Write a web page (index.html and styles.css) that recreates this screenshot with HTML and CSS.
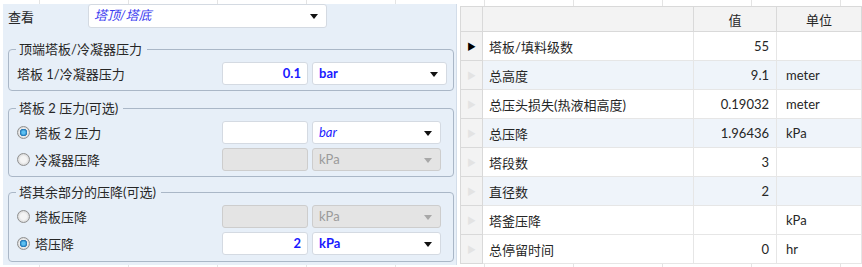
FILE: index.html
```html
<!DOCTYPE html>
<html lang="zh-CN">
<head>
  <meta charset="UTF-8" />
  <meta name="viewport" content="width=device-width, initial-scale=1.0"/>
  <title>塔压力</title>
  <link rel="stylesheet" href="styles.css">
</head>
<body>

  <div class="sheet">

    <div class="panel">
      <div class="view-row">
        <span class="view-label">查看</span>
        <div class="field select view">塔顶/塔底<i class="arrow"></i></div>
      </div>

      <fieldset class="group">
        <legend>顶端塔板/冷凝器压力</legend>
        <div class="row">
          <span class="label">塔板 1/冷凝器压力</span>
          <div class="field value strong">0.1</div>
          <div class="field select unit strong wide">bar<i class="arrow"></i></div>
        </div>
      </fieldset>

      <fieldset class="group">
        <legend>塔板 2 压力(可选)</legend>
        <div class="row">
          <span class="label"><i class="radio on"></i>塔板 2 压力</span>
          <div class="field value"></div>
          <div class="field select unit soft">bar<i class="arrow"></i></div>
        </div>
        <div class="row">
          <span class="label"><i class="radio"></i>冷凝器压降</span>
          <div class="field value off"></div>
          <div class="field select unit off">kPa<i class="arrow"></i></div>
        </div>
      </fieldset>

      <fieldset class="group last">
        <legend>塔其余部分的压降(可选)</legend>
        <div class="row">
          <span class="label"><i class="radio"></i>塔板压降</span>
          <div class="field value off"></div>
          <div class="field select unit off">kPa<i class="arrow"></i></div>
        </div>
        <div class="row">
          <span class="label"><i class="radio on"></i>塔压降</span>
          <div class="field value strong">2</div>
          <div class="field select unit strong">kPa<i class="arrow"></i></div>
        </div>
      </fieldset>
    </div>

    <table class="grid">
      <colgroup>
        <col class="c-head"><col class="c-name"><col class="c-val"><col class="c-unit">
      </colgroup>
      <thead>
        <tr><th></th><th></th><th>值</th><th>单位</th></tr>
      </thead>
      <tbody>
        <tr><td class="rh current">&#9654;</td><td>塔板/填料级数</td><td class="num">55</td><td></td></tr>
        <tr class="alt"><td class="rh">&#9654;</td><td>总高度</td><td class="num">9.1</td><td>meter</td></tr>
        <tr><td class="rh">&#9654;</td><td>总压头损失(热液相高度)</td><td class="num">0.19032</td><td>meter</td></tr>
        <tr class="alt"><td class="rh">&#9654;</td><td>总压降</td><td class="num">1.96436</td><td>kPa</td></tr>
        <tr><td class="rh">&#9654;</td><td>塔段数</td><td class="num">3</td><td></td></tr>
        <tr class="alt"><td class="rh">&#9654;</td><td>直径数</td><td class="num">2</td><td></td></tr>
        <tr><td class="rh">&#9654;</td><td>塔釜压降</td><td class="num"></td><td>kPa</td></tr>
        <tr><td class="rh">&#9654;</td><td>总停留时间</td><td class="num">0</td><td>hr</td></tr>
      </tbody>
    </table>

  </div>

</body>
</html>
```

FILE: styles.css
```css
:root {
  --panel: #e7eff8;
  --group-line: #aab7c7;
  --field-line: #d4dae2;
  --off-bg: #e4e4e4;
  --off-line: #cdcdcd;
  --blue: #1a1aff;
  --text: #262626;
  --grid-line: #d9d9d9;
}

* {
  box-sizing: border-box;
}

body {
  margin: 0;
  width: 862px;
  height: 267px;
  overflow: hidden;
  font-family: Lato, "Noto Sans CJK SC", sans-serif;
  font-size: 13px;
  color: var(--text);
  background-color: #fff;
  background-image: repeating-linear-gradient(90deg, transparent 0 39px, #e4e4e4 39px 40px, transparent 40px 89px);
}

.sheet {
  display: flex;
  align-items: flex-start;
  padding: 4px 0 0 3px;
}

/* left input panel */
.panel {
  width: 454px;
  height: 261px;
  background: var(--panel);
  padding: 0 0 0 5px;
  border-right: 1px solid #d3dde9;
}

.view-row {
  display: flex;
  align-items: center;
  height: 24px;
}

.view-label {
  width: 80px;
}

.field {
  height: 23px;
  line-height: 21px;
  border: 1px solid var(--field-line);
  border-radius: 3px;
  background: #fff;
  padding: 0 6px;
  position: relative;
}

.view {
  width: 239px;
  height: 24px;
  color: #3b3bf0;
  font-style: italic;
  padding-left: 5px;
}

.arrow {
  position: absolute;
  right: 8px;
  top: 9px;
  border-left: 4px solid transparent;
  border-right: 4px solid transparent;
  border-top: 5px solid #111;
}

.group {
  margin: 13px 0 0 0;
  width: 446px;
  border: 1px solid var(--group-line);
  border-radius: 4px;
  padding: 0 0 5px 8px;
}

.group + .group {
  margin-top: 9px;
}

.group.last {
  margin-top: 7px;
  padding-bottom: 6px;
}

.group legend {
  padding: 0 5px 0 3px;
  margin-left: -1px;
  line-height: 16px;
  height: 16px;
}

.row {
  display: flex;
  align-items: center;
  height: 23px;
  margin-top: 4px;
}

.group .row:first-of-type {
  margin-top: 5px;
}

.label {
  width: 205px;
  display: flex;
  align-items: center;
}

.value {
  width: 86px;
  text-align: right;
}

.unit {
  width: 129px;
  margin-left: 4px;
}

.unit.wide {
  width: 135px;
}

.strong {
  color: var(--blue);
  font-weight: bold;
}

.soft {
  color: var(--blue);
  font-style: italic;
}

.off {
  background: var(--off-bg);
  border-color: var(--off-line);
  color: #9a9a9a;
}

.off .arrow {
  border-top-color: #a8a8a8;
}

.radio {
  width: 13px;
  height: 13px;
  border-radius: 50%;
  border: 1px solid #8f8f8f;
  background: radial-gradient(circle, #f4f4f4 0 3px, #d6d6d6 6px);
  margin-right: 5px;
}

.radio.on {
  background: radial-gradient(circle, #5cc0f2 0 1.5px, #1a6fb0 3.5px, #ececec 4px, #d2d2d2 6px);
}

/* right result grid */
.grid {
  margin: 2px 0 0 3px;
  width: 401px;
  border-collapse: collapse;
  table-layout: fixed;
  background: #fff;
  border: 1px solid #c6c6c6;
}

.c-head { width: 22px; }
.c-name { width: 211px; }
.c-val { width: 83px; }
.c-unit { width: 85px; }

.grid th {
  height: 25px;
  background: #f3f3f3;
  border: 1px solid var(--grid-line);
  font-weight: normal;
  text-align: center;
  padding: 0;
}

.grid td {
  height: 29px;
  border: 1px solid #e6e6e6;
  padding: 0 7px 0 6px;
  white-space: nowrap;
}

.grid td:last-child {
  padding-left: 9px;
}

.grid tr.alt td {
  background: #eff4fa;
}

.grid td.rh,
.grid tr.alt td.rh {
  background: #f3f3f3;
  border-color: var(--grid-line);
  color: #e3e3e3;
  font-size: 9px;
  text-align: center;
  padding: 0;
}

.grid td.rh.current {
  color: #000;
}

.num {
  text-align: right;
}
```
